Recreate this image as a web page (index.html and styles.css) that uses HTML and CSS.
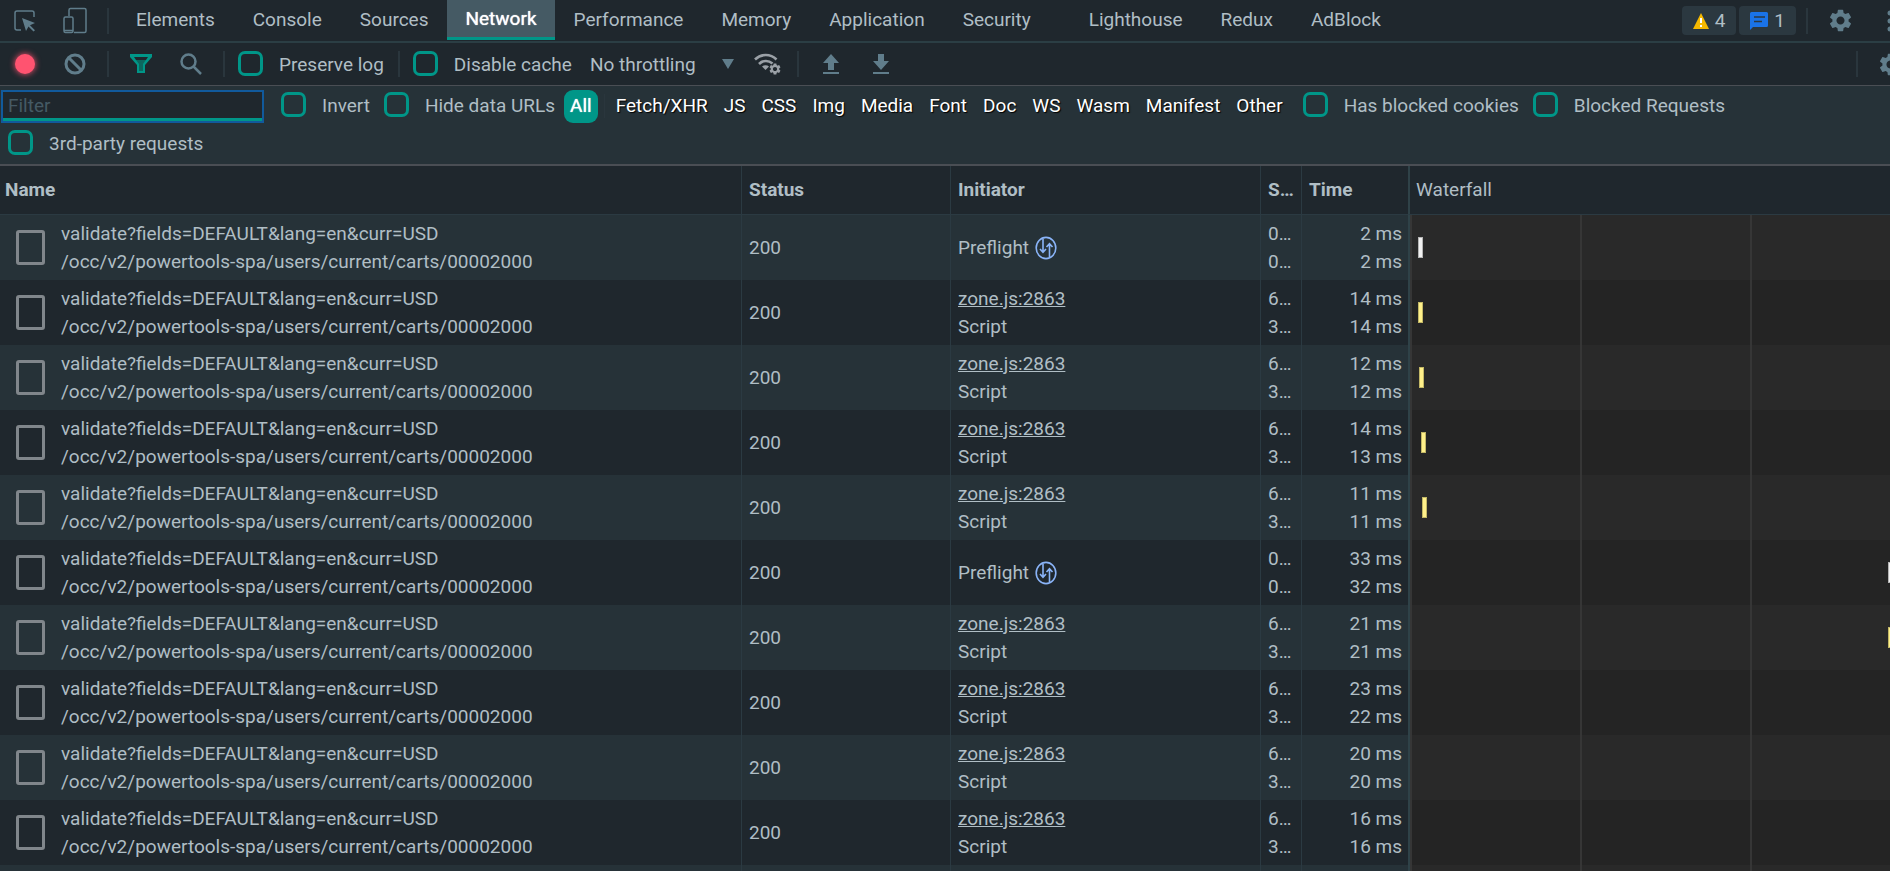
FILE: index.html
```
<!DOCTYPE html>
<html lang="en">
<head>
    <meta charset="UTF-8">
    <meta name="viewport" content="width=device-width, initial-scale=1.0">
    <title>DevTools - Network</title>
    <link rel="stylesheet" href="styles.css">
</head>
<body>
    <!-- Shared icons -->
    <svg class="sprite" aria-hidden="true">
        <symbol id="gear" viewBox="0 0 24 24">
            <path d="M19.14 12.94c.04-.3.06-.61.06-.94 0-.32-.02-.64-.07-.94l2.03-1.58c.18-.14.23-.41.12-.61l-1.92-3.32c-.12-.22-.37-.29-.59-.22l-2.39.96c-.5-.38-1.03-.7-1.62-.94l-.36-2.54c-.04-.24-.24-.41-.48-.41h-3.84c-.24 0-.43.17-.47.41l-.36 2.54c-.59.24-1.13.57-1.62.94l-2.39-.96c-.22-.08-.47 0-.59.22L2.74 8.87c-.12.21-.08.47.12.61l2.03 1.58c-.05.3-.09.63-.09.94s.02.64.07.94l-2.03 1.58c-.18.14-.23.41-.12.61l1.92 3.32c.12.22.37.29.59.22l2.39-.96c.5.38 1.03.7 1.62.94l.36 2.54c.05.24.24.41.48.41h3.84c.24 0 .44-.17.47-.41l.36-2.54c.59-.24 1.13-.56 1.62-.94l2.39.96c.22.08.47 0 .59-.22l1.92-3.32c.12-.22.07-.47-.12-.61l-2.01-1.58zM12 15.6c-1.98 0-3.6-1.62-3.6-3.6s1.62-3.6 3.6-3.6 3.6 1.62 3.6 3.6-1.62 3.6-3.6 3.6z"/>
        </symbol>
        <symbol id="preflight" viewBox="0 0 22 24">
            <g fill="none" stroke="currentColor" stroke-width="1.6">
                <ellipse cx="11" cy="12" rx="9.8" ry="10.6"/>
                <path d="M8 3v13M5 13l3 3.4 3-3.4M14.5 21V8M11.5 11l3-3.4 3 3.4"/>
            </g>
        </symbol>
    </svg>

    <header class="tab-bar">
        <button class="icon-btn" aria-label="Inspect">
            <svg width="24" height="24" viewBox="0 0 24 24">
                <path d="M8 21H4a2 2 0 0 1-2-2V4a2 2 0 0 1 2-2h15a2 2 0 0 1 2 2v4" fill="none" stroke="currentColor" stroke-width="1.5"/>
                <path d="M9 9l13 5-5 2.2 5 5-1.5 1.3-5-5L13 22z"/>
            </svg>
        </button>
        <button class="icon-btn" aria-label="Toggle device">
            <svg class="outline" width="26" height="28" viewBox="0 0 26 28" stroke-width="1.5">
                <path d="M7 9V3a1.5 1.5 0 0 1 1.5-1.5h14A1.5 1.5 0 0 1 24 3v21a1.5 1.5 0 0 1-1.5 1.5H12"/>
                <rect x="2" y="10" width="9" height="15.5" rx="1.5"/>
                <path d="M2 23.5h9"/>
            </svg>
        </button>
        <span class="divider"></span>
        <nav class="tabs">
            <button class="tab">Elements</button>
            <button class="tab">Console</button>
            <button class="tab">Sources</button>
            <button class="tab active">Network</button>
            <button class="tab">Performance</button>
            <button class="tab">Memory</button>
            <button class="tab">Application</button>
            <button class="tab">Security</button>
            <button class="tab extension">Lighthouse</button>
            <button class="tab">Redux</button>
            <button class="tab">AdBlock</button>
        </nav>
        <div class="tab-bar-right">
            <button class="badge">
                <svg width="16" height="16" viewBox="0 0 16 16"><path d="M8 0l8 16H0z" fill="#f5b800"/><path d="M7 5h2v5H7zM7 12h2v2H7z" fill="#fff"/></svg>
                4
            </button>
            <button class="badge">
                <svg width="18" height="18" viewBox="0 0 18 18"><path d="M1.5 0h15A1.5 1.5 0 0 1 18 1.5v12a1.5 1.5 0 0 1-1.5 1.5H3l-3 3V1.5A1.5 1.5 0 0 1 1.5 0z" fill="#1a73e8"/><path d="M4 5h11M4 9.5h8" stroke="#2b3840" stroke-width="1.5"/></svg>
                1
            </button>
            <span class="divider"></span>
            <button class="icon-btn" aria-label="Settings"><svg width="27" height="27"><use href="#gear"/></svg></button>
            <button class="icon-btn" aria-label="More"><svg width="6" height="22" viewBox="0 0 6 22"><circle cx="3" cy="3" r="2.5"/><circle cx="3" cy="11" r="2.5"/><circle cx="3" cy="19" r="2.5"/></svg></button>
        </div>
    </header>

    <div class="toolbar">
        <button class="icon-btn" aria-label="Record"><span class="record"></span></button>
        <button class="icon-btn" aria-label="Clear">
            <svg class="outline" width="22" height="22" viewBox="0 0 22 22" stroke-width="3"><circle cx="11" cy="11" r="9"/><path d="M4.5 4.5l13 13"/></svg>
        </button>
        <span class="divider"></span>
        <button class="icon-btn funnel" aria-label="Filter">
            <svg width="22" height="20" viewBox="0 0 22 20"><path d="M0 0h22v3l-7 8v8h-8v-8L0 3z"/><path d="M4 3h14l-2 3H6z" fill="#1f272d"/><path d="M6 6h10l-3 4v7H9v-7z" fill="#0c675f"/></svg>
        </button>
        <button class="icon-btn" aria-label="Search">
            <svg class="outline" width="22" height="22" viewBox="0 0 22 22" stroke-width="2.5"><circle cx="8.5" cy="8.5" r="7"/><path d="M13.5 13.5l7.5 7.5"/></svg>
        </button>
        <span class="divider"></span>
        <label class="check"><input type="checkbox">Preserve log</label>
        <span class="divider"></span>
        <label class="check"><input type="checkbox">Disable cache</label>
        <select class="throttling" aria-label="Throttling">
            <option>No throttling</option>
        </select>
        <svg class="caret" width="12" height="10" viewBox="0 0 12 10"><path d="M0 0h12L6 10z"/></svg>
        <button class="icon-btn conditions" aria-label="Network conditions">
            <svg width="27" height="22" viewBox="0 0 27 22">
                <g fill="none" stroke="currentColor" stroke-width="2.6"><path d="M1 6.5C7 .5 16.500.5 22.5 6.5"/><path d="M5 11c4-4 9.500-4 13.500-.5"/></g>
                <path d="M8 13.5c2-1.600 5-1.600 7 0L11.5 17z"/>
                <svg x="14" y="9" width="14" height="14"><use href="#gear"/></svg>
            </svg>
        </button>
        <span class="divider"></span>
        <button class="icon-btn" aria-label="Import HAR"><svg width="16" height="20" viewBox="0 0 16 20"><path d="M8 0l8 9h-5v7H5V9H0zM0 18h16v2H0z"/></svg></button>
        <button class="icon-btn" aria-label="Export HAR"><svg width="16" height="20" viewBox="0 0 16 20"><path d="M5 0h6v7h5l-8 9-8-9h5zM0 18h16v2H0z"/></svg></button>
        <div class="toolbar-right">
            <span class="divider"></span>
            <button class="icon-btn" aria-label="Network settings"><svg width="27" height="27"><use href="#gear"/></svg></button>
        </div>
    </div>

    <div class="filter-bar">
        <input class="filter-input" type="text" placeholder="Filter" aria-label="Filter">
        <label class="check"><input type="checkbox">Invert</label>
        <label class="check"><input type="checkbox">Hide data URLs</label>
        <div class="types">
            <button class="type selected">All</button>
            <span class="type-divider"></span>
            <button class="type">Fetch/XHR</button>
            <button class="type">JS</button>
            <button class="type">CSS</button>
            <button class="type">Img</button>
            <button class="type">Media</button>
            <button class="type">Font</button>
            <button class="type">Doc</button>
            <button class="type">WS</button>
            <button class="type">Wasm</button>
            <button class="type">Manifest</button>
            <button class="type">Other</button>
        </div>
        <label class="check"><input type="checkbox">Has blocked cookies</label>
        <label class="check"><input type="checkbox">Blocked Requests</label>
        <label class="check"><input type="checkbox">3rd-party requests</label>
    </div>

    <main class="grid">
        <table class="requests">
            <colgroup>
                <col>
                <col class="col-status">
                <col class="col-initiator">
                <col class="col-size">
                <col class="col-time">
                <col class="col-waterfall">
            </colgroup>
            <thead>
                <tr>
                    <th>Name</th>
                    <th>Status</th>
                    <th>Initiator</th>
                    <th>S…</th>
                    <th>Time</th>
                    <th class="waterfall-head">Waterfall</th>
                </tr>
            </thead>
            <tbody>
                <tr>
                    <td><label class="name"><input type="checkbox"><span>validate?fields=DEFAULT&amp;lang=en&amp;curr=USD<br>/occ/v2/powertools-spa/users/current/carts/00002000</span></label></td>
                    <td>200</td>
                    <td><span class="preflight">Preflight <svg width="22" height="24"><use href="#preflight"/></svg></span></td>
                    <td>0…<br>0…</td>
                    <td class="time">2 ms<br>2 ms</td>
                    <td class="waterfall"><div class="bar preflight-bar" style="margin-left: 8px"></div></td>
                </tr>
                <tr>
                    <td><label class="name"><input type="checkbox"><span>validate?fields=DEFAULT&amp;lang=en&amp;curr=USD<br>/occ/v2/powertools-spa/users/current/carts/00002000</span></label></td>
                    <td>200</td>
                    <td><a href="#">zone.js:2863</a><br>Script</td>
                    <td>6…<br>3…</td>
                    <td class="time">14 ms<br>14 ms</td>
                    <td class="waterfall"><div class="bar" style="margin-left: 8px"></div></td>
                </tr>
                <tr>
                    <td><label class="name"><input type="checkbox"><span>validate?fields=DEFAULT&amp;lang=en&amp;curr=USD<br>/occ/v2/powertools-spa/users/current/carts/00002000</span></label></td>
                    <td>200</td>
                    <td><a href="#">zone.js:2863</a><br>Script</td>
                    <td>6…<br>3…</td>
                    <td class="time">12 ms<br>12 ms</td>
                    <td class="waterfall"><div class="bar" style="margin-left: 9px"></div></td>
                </tr>
                <tr>
                    <td><label class="name"><input type="checkbox"><span>validate?fields=DEFAULT&amp;lang=en&amp;curr=USD<br>/occ/v2/powertools-spa/users/current/carts/00002000</span></label></td>
                    <td>200</td>
                    <td><a href="#">zone.js:2863</a><br>Script</td>
                    <td>6…<br>3…</td>
                    <td class="time">14 ms<br>13 ms</td>
                    <td class="waterfall"><div class="bar" style="margin-left: 11px"></div></td>
                </tr>
                <tr>
                    <td><label class="name"><input type="checkbox"><span>validate?fields=DEFAULT&amp;lang=en&amp;curr=USD<br>/occ/v2/powertools-spa/users/current/carts/00002000</span></label></td>
                    <td>200</td>
                    <td><a href="#">zone.js:2863</a><br>Script</td>
                    <td>6…<br>3…</td>
                    <td class="time">11 ms<br>11 ms</td>
                    <td class="waterfall"><div class="bar" style="margin-left: 12px"></div></td>
                </tr>
                <tr>
                    <td><label class="name"><input type="checkbox"><span>validate?fields=DEFAULT&amp;lang=en&amp;curr=USD<br>/occ/v2/powertools-spa/users/current/carts/00002000</span></label></td>
                    <td>200</td>
                    <td><span class="preflight">Preflight <svg width="22" height="24"><use href="#preflight"/></svg></span></td>
                    <td>0…<br>0…</td>
                    <td class="time">33 ms<br>32 ms</td>
                    <td class="waterfall"><div class="bar preflight-bar" style="margin-left: 478px"></div></td>
                </tr>
                <tr>
                    <td><label class="name"><input type="checkbox"><span>validate?fields=DEFAULT&amp;lang=en&amp;curr=USD<br>/occ/v2/powertools-spa/users/current/carts/00002000</span></label></td>
                    <td>200</td>
                    <td><a href="#">zone.js:2863</a><br>Script</td>
                    <td>6…<br>3…</td>
                    <td class="time">21 ms<br>21 ms</td>
                    <td class="waterfall"><div class="bar" style="margin-left: 478px"></div></td>
                </tr>
                <tr>
                    <td><label class="name"><input type="checkbox"><span>validate?fields=DEFAULT&amp;lang=en&amp;curr=USD<br>/occ/v2/powertools-spa/users/current/carts/00002000</span></label></td>
                    <td>200</td>
                    <td><a href="#">zone.js:2863</a><br>Script</td>
                    <td>6…<br>3…</td>
                    <td class="time">23 ms<br>22 ms</td>
                    <td class="waterfall"></td>
                </tr>
                <tr>
                    <td><label class="name"><input type="checkbox"><span>validate?fields=DEFAULT&amp;lang=en&amp;curr=USD<br>/occ/v2/powertools-spa/users/current/carts/00002000</span></label></td>
                    <td>200</td>
                    <td><a href="#">zone.js:2863</a><br>Script</td>
                    <td>6…<br>3…</td>
                    <td class="time">20 ms<br>20 ms</td>
                    <td class="waterfall"></td>
                </tr>
                <tr>
                    <td><label class="name"><input type="checkbox"><span>validate?fields=DEFAULT&amp;lang=en&amp;curr=USD<br>/occ/v2/powertools-spa/users/current/carts/00002000</span></label></td>
                    <td>200</td>
                    <td><a href="#">zone.js:2863</a><br>Script</td>
                    <td>6…<br>3…</td>
                    <td class="time">16 ms<br>16 ms</td>
                    <td class="waterfall"></td>
                </tr>
                <!-- Takes whatever height is left under the last request -->
                <tr class="filler">
                    <td></td>
                    <td></td>
                    <td></td>
                    <td></td>
                    <td></td>
                    <td class="waterfall"></td>
                </tr>
            </tbody>
        </table>
    </main>
</body>
</html>
```
FILE: styles.css
```
* {
    box-sizing: border-box;
}

body {
    display: flex;
    flex-direction: column;
    margin: 0;
    height: 100vh;
    overflow: hidden;
    background-color: #1f272d;
    color: #b0bec5;
    font-family: Roboto, sans-serif;
    font-size: 19px;
    line-height: 28px;
}

button, input, select {
    font: inherit;
    color: inherit;
    margin: 0;
    padding: 0;
    border: none;
    background: none;
}

svg {
    display: block;
    flex: none;
    fill: currentColor;
}

svg.outline {
    fill: none;
    stroke: currentColor;
}

.sprite {
    display: none;
}

/* Top tabs */
.tab-bar, .toolbar {
    display: flex;
    flex: none;
    align-items: center;
    height: 43px;
    overflow: hidden;
    white-space: nowrap;
}

.tab-bar {
    border-bottom: 2px solid #2b3e44;
}

.icon-btn {
    display: flex;
    flex: none;
    align-items: center;
    justify-content: center;
    width: 50px;
    height: 40px;
    color: #607d8b;
}

.divider {
    flex: none;
    width: 2px;
    height: 26px;
    margin: 0 7px;
    background-color: #2a363d;
}

.tabs {
    display: flex;
    align-self: flex-start;
    padding-left: 1px;
}

.tab {
    height: 40px;
    padding: 0 19px;
}

.tab.active {
    padding: 0 18px;
    color: #fff;
    background-color: #455a64;
    border-bottom: 3px solid #009688;
    text-shadow: 0 0 1px #fff;
}

.tab.extension {
    margin-left: 20px;
}

.tab-bar-right, .toolbar-right {
    display: flex;
    align-items: center;
    margin-left: auto;
    margin-right: -25px;
}

.badge {
    display: flex;
    align-items: center;
    gap: 6px;
    height: 29px;
    padding: 0 11px;
    margin-right: 3px;
    border-radius: 4px;
    background-color: #2b3840;
}

/* Network toolbar */
.toolbar {
    border-bottom: 1px solid #4a4e54;
}

.record {
    width: 20px;
    height: 20px;
    border-radius: 50%;
    background-color: #ff5370;
    box-shadow: 0 0 6px #ff5370;
}

.funnel {
    color: #009688;
}

.check {
    display: flex;
    align-items: center;
    gap: 16px;
}

.check input {
    appearance: none;
    width: 25px;
    height: 25px;
    margin-bottom: 3px;
    border: 3px solid #009688;
    border-radius: 7px;
}

.toolbar .check {
    padding: 2px 7px 0 6px;
}

.throttling {
    appearance: none;
    width: 132px;
    margin-left: 11px;
    padding-top: 2px;
}

.caret {
    color: #607d8b;
}

.conditions {
    width: 56px;
    padding-left: 12px;
    color: #9aa0a6;
}

/* Filters */
.filter-bar {
    display: flex;
    flex: none;
    flex-wrap: wrap;
    align-items: center;
    row-gap: 4px;
    padding: 3px 1px;
    background-color: #263238;
    border-bottom: 2px solid #4a4e54;
}

.filter-bar .check {
    height: 34px;
    margin: 0 7px;
}

.filter-input {
    width: 263px;
    height: 33px;
    margin-right: 10px;
    padding: 0 5px 2px;
    background-color: #1f272d;
    border: 2px solid #115a9c;
    box-shadow: inset 0 -3px #009688;
}

.filter-input::placeholder {
    color: #455a64;
}

.types {
    display: flex;
    align-items: center;
    margin: 0 5px 0 2px;
}

.type {
    height: 33px;
    padding: 0 8px;
    color: #fff;
    text-shadow: 1px 1px 1px #000;
}

.type.selected {
    padding: 0 6px;
    border-radius: 9px;
    background-color: #009688;
    text-shadow: 0 0 1px #fff;
}

.type-divider {
    width: 1px;
    height: 24px;
    margin: 0 3px 0 6px;
    background-color: #2a363d;
}

/* Requests table */
.grid {
    flex: 1;
    min-height: 0;
    overflow: hidden;
}

.requests {
    width: 100%;
    height: 100%;
    table-layout: fixed;
    border-collapse: separate;
    border-spacing: 0;
}

.col-status {
    width: 209px;
}

.col-initiator {
    width: 310px;
}

.col-size {
    width: 41px;
}

.col-time {
    width: 107px;
}

.col-waterfall {
    width: 482px;
}

.requests th {
    height: 49px;
    padding: 0 0 0 7px;
    text-align: left;
    font-weight: 700;
    border-left: 1px solid #2b3a42;
    border-bottom: 1px solid #2b3a42;
}

.requests th:first-child {
    padding-left: 5px;
    border-left: none;
}

.requests .waterfall-head {
    font-weight: 400;
    border-left: 2px solid #2f4248;
    padding-left: 6px;
}

.requests td {
    height: 65px;
    padding: 0 0 0 7px;
    border-left: 1px solid #2b3a42;
    white-space: nowrap;
}

.requests td:first-child {
    padding-left: 16px;
    border-left: none;
}

.requests .filler td {
    height: auto;
}

.requests tbody tr:nth-child(odd) {
    background-color: #263238;
}

.requests a {
    color: inherit;
}

.requests .time {
    padding-right: 6px;
    text-align: right;
}

.name {
    display: flex;
    align-items: center;
    gap: 16px;
}

.name input {
    appearance: none;
    width: 29px;
    height: 35px;
    border: 3px solid #80868b;
    border-radius: 3px;
}

.preflight {
    display: flex;
    align-items: center;
    gap: 6px;
}

.preflight svg {
    color: #8ab4f8;
}

.requests .waterfall {
    padding: 0;
    overflow: hidden;
    border-left: 2px solid #2f4248;
    background: repeating-linear-gradient(to right, #363636 0 2px, #242424 2px 170px);
}

.requests tr:nth-child(odd) .waterfall {
    background: repeating-linear-gradient(to right, #363636 0 2px, #292929 2px 170px);
}

.bar {
    width: 5px;
    height: 21px;
    background-color: #fff08a;
    border: 1px solid #c2b766;
}

.preflight-bar {
    background-color: #f1f1f1;
    border-color: #b4b4b4;
}
```
